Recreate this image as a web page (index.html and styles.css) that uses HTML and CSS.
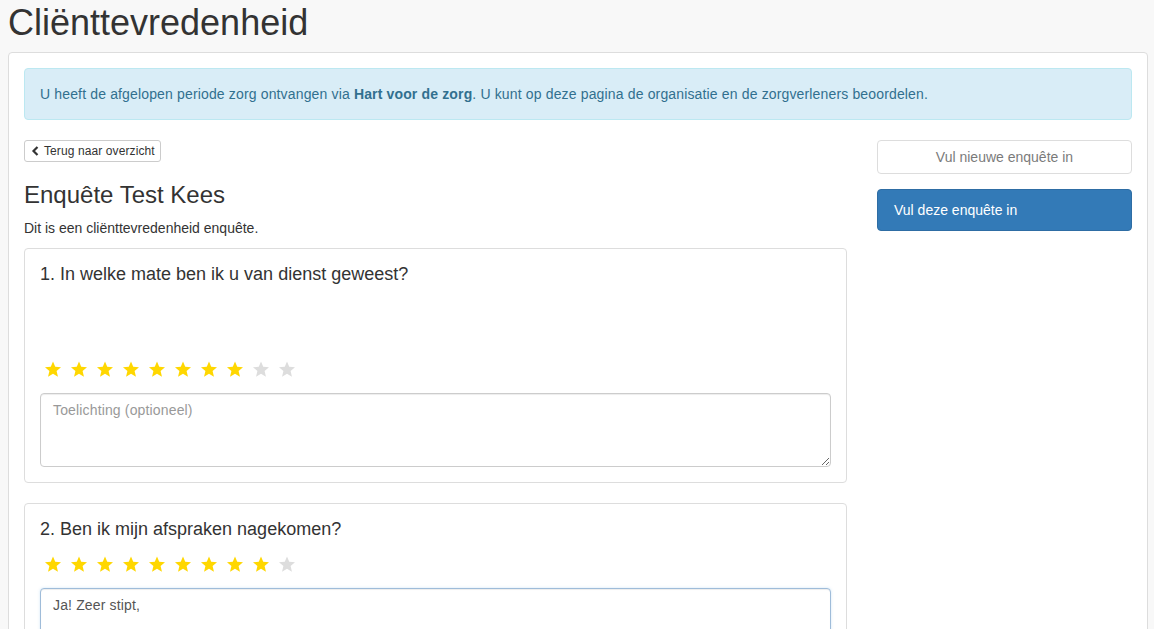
FILE: index.html
```html
<!DOCTYPE html>
<html lang="nl">
<head>
  <meta charset="UTF-8">
  <title>Cliënttevredenheid</title>
  <link rel="stylesheet" href="styles.css">
</head>

<body>
  <svg width="0" height="0" style="position:absolute">
    <symbol id="star" viewBox="0 0 20 19">
      <polygon points="10,0.5 12.65,6.86 19.51,7.41 14.28,11.89 15.88,18.59 10,15 4.12,18.59 5.72,11.89 0.49,7.41 7.35,6.86"/>
    </symbol>
  </svg>

  <h1 class="page-title">Cliënttevredenheid</h1>

  <div class="panel">
    <div class="alert">
      U heeft de afgelopen periode zorg ontvangen via <strong>Hart voor de zorg</strong>. U kunt op deze pagina de organisatie en de zorgverleners beoordelen.
    </div>

    <div class="row">
      <!-- Enquete -->
      <div class="col-main">
        <button class="btn-back">
          <svg class="chevron" viewBox="0 0 8 10" width="8" height="10"><path d="M6.5 1 L2.5 5 L6.5 9" fill="none" stroke="#333" stroke-width="2.2"/></svg>
          Terug naar overzicht
        </button>

        <h3 class="survey-title">Enquête Test Kees</h3>
        <p class="survey-intro">Dit is een cliënttevredenheid enquête.</p>

        <div class="question">
          <h4>1. In welke mate ben ik u van dienst geweest?</h4>
          <div class="question-info"></div>
          <div class="stars">
            <svg class="on"><use href="#star"/></svg>
            <svg class="on"><use href="#star"/></svg>
            <svg class="on"><use href="#star"/></svg>
            <svg class="on"><use href="#star"/></svg>
            <svg class="on"><use href="#star"/></svg>
            <svg class="on"><use href="#star"/></svg>
            <svg class="on"><use href="#star"/></svg>
            <svg class="on"><use href="#star"/></svg>
            <svg><use href="#star"/></svg>
            <svg><use href="#star"/></svg>
          </div>
          <textarea class="form-control" placeholder="Toelichting (optioneel)"></textarea>
        </div>

        <div class="question">
          <h4>2. Ben ik mijn afspraken nagekomen?</h4>
          <div class="stars">
            <svg class="on"><use href="#star"/></svg>
            <svg class="on"><use href="#star"/></svg>
            <svg class="on"><use href="#star"/></svg>
            <svg class="on"><use href="#star"/></svg>
            <svg class="on"><use href="#star"/></svg>
            <svg class="on"><use href="#star"/></svg>
            <svg class="on"><use href="#star"/></svg>
            <svg class="on"><use href="#star"/></svg>
            <svg class="on"><use href="#star"/></svg>
            <svg><use href="#star"/></svg>
          </div>
          <textarea class="form-control focus" placeholder="Toelichting (optioneel)">Ja! Zeer stipt,</textarea>
        </div>
      </div>

      <!-- Acties -->
      <div class="col-side">
        <button class="btn-new" disabled>Vul nieuwe enquête in</button>
        <button class="btn-fill">Vul deze enquête in</button>
      </div>
    </div>
  </div>
</body>
</html>
```

FILE: styles.css
```css
body {
  margin: 0;
  padding: 3px 6px 0 8px;
  background: #f8f8f8;
  font-family: "Liberation Sans", Arial, sans-serif;
  font-size: 14px;
  line-height: 20px;
  color: #333;
  overflow: hidden;
}

.page-title {
  font-size: 36px;
  font-weight: normal;
  line-height: 40px;
  margin: 0 0 9px;
  color: #333;
}

.panel {
  background: #fff;
  border: 1px solid #ddd;
  border-radius: 4px;
  padding: 15px;
  height: 700px;
}

.alert {
  background: #d9edf7;
  border: 1px solid #bce8f1;
  color: #31708f;
  border-radius: 4px;
  padding: 15px;
  margin-bottom: 20px;
  letter-spacing: .15px;
}

.row {
  display: flex;
  margin: 0 -15px;
}

.col-main {
  flex: 1;
  padding: 0 15px;
}

.col-side {
  flex: 0 0 285px;
  padding: 0 15px;
  box-sizing: border-box;
}

.btn-back {
  display: inline-flex;
  align-items: center;
  height: 22px;
  padding: 1px 5px 1px 6px;
  font-family: inherit;
  font-size: 12px;
  letter-spacing: .1px;
  color: #333;
  background: #fff;
  border: 1px solid #ccc;
  border-radius: 3px;
}

.chevron {
  margin-right: 5px;
}

.survey-title {
  font-size: 24px;
  font-weight: normal;
  line-height: 26px;
  margin: 20px 0 10px;
}

.survey-intro {
  font-size: 14px;
  margin: 0 0 10px;
}

.question {
  border: 1px solid #ddd;
  border-radius: 4px;
  padding: 15px;
  margin-bottom: 20px;
}

.question h4 {
  font-size: 18px;
  font-weight: normal;
  line-height: 20px;
  margin: 0 0 16px;
}

.question-info {
  height: 60px;
}

.stars {
  display: flex;
  gap: 8px;
  padding-left: 4px;
  height: 18px;
  align-items: center;
  margin-bottom: 15px;
}

.stars svg {
  width: 18px;
  height: 16px;
  fill: #ddd;
}

.stars svg.on {
  fill: #ffd700;
}

.form-control {
  display: block;
  width: 100%;
  height: 74px;
  box-sizing: border-box;
  padding: 6px 12px;
  font-family: inherit;
  font-size: 14px;
  line-height: 20px;
  letter-spacing: .15px;
  color: #555;
  border: 1px solid #ccc;
  border-radius: 4px;
  box-shadow: inset 0 1px 1px rgba(0, 0, 0, .075);
  resize: vertical;
}

.form-control::placeholder {
  color: #999;
}

.form-control.focus {
  border-color: #9fbcd9;
  box-shadow: inset 0 1px 1px rgba(0, 0, 0, .075), 0 0 3px rgba(102, 175, 233, .3);
}

.btn-new {
  display: block;
  width: 100%;
  height: 34px;
  margin-bottom: 15px;
  font-family: inherit;
  font-size: 14px;
  color: #333;
  background: #fff;
  border: 1px solid #ccc;
  border-radius: 4px;
  opacity: .65;
}

.btn-fill {
  display: block;
  width: 100%;
  height: 42px;
  padding: 10px 16px;
  text-align: left;
  font-family: inherit;
  font-size: 14px;
  color: #fff;
  background: #337ab7;
  border: 1px solid #2e6da4;
  border-radius: 4px;
}
```
